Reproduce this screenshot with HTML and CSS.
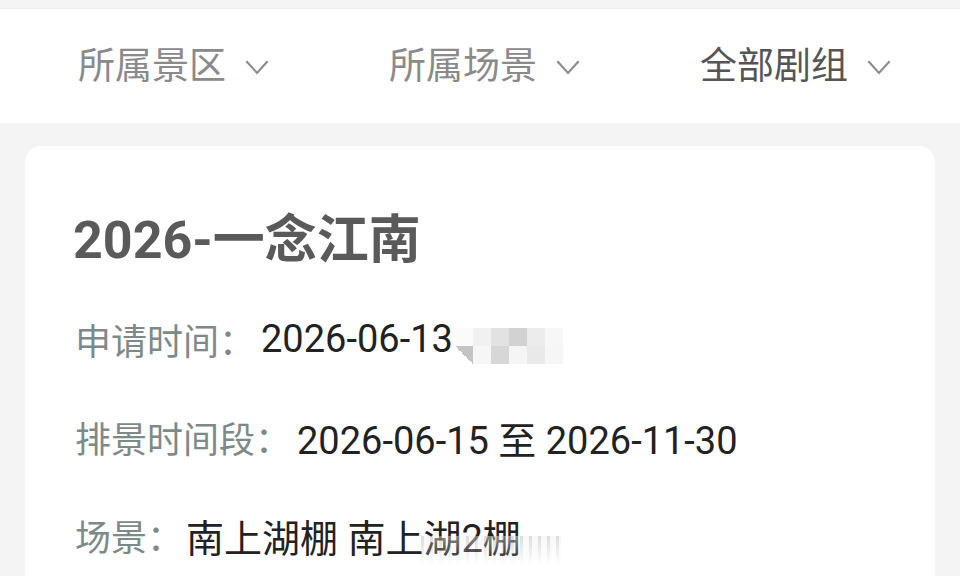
FILE: index.html
```html
<!DOCTYPE html>
<html lang="zh-CN">

<head>
    <meta charset="UTF-8">
    <meta name="viewport" content="width=device-width, initial-scale=1.0">
    <title>排景申请</title>
    <link rel="stylesheet" href="styles.css">
</head>

<body>
    <!-- Filter bar -->
    <div class="filters">
        <div class="filter">所属景区
            <svg class="arrow" viewBox="0 0 24 16"><path d="M2 3 L12 14 L22 3" /></svg>
        </div>
        <div class="filter">所属场景
            <svg class="arrow" viewBox="0 0 24 16"><path d="M2 3 L12 14 L22 3" /></svg>
        </div>
        <div class="filter active">全部剧组
            <svg class="arrow" viewBox="0 0 24 16"><path d="M2 3 L12 14 L22 3" /></svg>
        </div>
    </div>

    <!-- Schedule card -->
    <div class="card">
        <h2 class="title">2026-一念江南</h2>
        <div class="row">
            <span class="label">申请时间：</span>
            <span class="value">2026-06-13</span>
            <span class="mosaic">
                <i class="c1"></i><i class="c2"></i><i class="c3"></i><i class="c4"></i><i class="c5"></i><i class="c6"></i>
                <i class="c7"></i><i class="c8"></i><i class="c9"></i><i class="c10"></i><i class="c11"></i><i class="c12"></i>
            </span>
        </div>
        <div class="row">
            <span class="label">排景时间段：</span>
            <span class="value">2026-06-15 至 2026-11-30</span>
        </div>
        <div class="row">
            <span class="label">场景：</span>
            <span class="value scene">南上湖棚 南上湖2棚</span>
            <span class="blur"></span>
        </div>
    </div>
</body>

</html>
```

FILE: styles.css
```css
/* Page */
body {
    margin: 0;
    background-color: #f4f4f4;
    font-family: "Noto Sans CJK SC", "Noto Sans", sans-serif;
    overflow: hidden;
}

/* Filter bar at the top */
.filters {
    margin-top: 8px;
    height: 114px;
    background-color: #fff;
    display: flex;
    align-items: center;
    justify-content: space-between;
    padding: 0 68px 0 78px;
    border-top: 1px solid #ececec;
}

.filter {
    display: flex;
    align-items: center;
    gap: 18px;
    font-size: 37px;
    color: #8a8a8a;
    margin-top: -6px;
}

.filter.active {
    color: #555;
}

.arrow {
    width: 26px;
    height: 17px;
    margin-top: 6px;
}

.arrow path {
    fill: none;
    stroke: #8c8c8c;
    stroke-width: 2;
}

/* Card */
.card {
    margin: 23px 25px 0;
    background-color: #fff;
    border-radius: 16px;
    padding: 46px 48px 0;
    height: 440px;
}

.title {
    margin: 0;
    font-family: Roboto, "Noto Sans CJK SC", sans-serif;
    font-size: 52px;
    line-height: 98px;
    font-weight: bold;
    color: #5a5a5a;
}

.row {
    display: flex;
    align-items: center;
    height: 98px;
    font-size: 36px;
    position: relative;
}

.label {
    color: #7e8a87;
    margin-left: 2px;
}

.value {
    font-family: Roboto, "Noto Sans CJK SC", sans-serif;
    font-size: 38px;
    color: #222;
    margin-left: 6px;
}

.value.scene {
    margin-left: 3px;
}

/* Pixelated watermark after the date */
.mosaic {
    display: grid;
    grid-template-columns: repeat(6, 18px);
    grid-template-rows: 18px 18px;
    margin-left: 2px;
    margin-top: 14px;
}

.mosaic i {
    display: block;
}

.c1 { background: #fbfbfb; }
.c2 { background: #f1f1f1; }
.c3 { background: #e2e2e2; }
.c4 { background: #d2d2d2; }
.c5 { background: #ececec; }
.c6 { background: #f7f7f7; }
.c7 { background: linear-gradient(45deg, #fff 50%, #c4c4c4 50%); }
.c8 { background: #f6f6f6; }
.c9 { background: #d7d7d7; }
.c10 { background: #f5f5f5; }
.c11 { background: #e9e9e9; }
.c12 { background: #f6f6f6; }

/* Smeared watermark on the last line */
.blur {
    position: absolute;
    left: 348px;
    top: 50px;
    width: 140px;
    height: 28px;
    background: repeating-linear-gradient(to right, rgba(190, 190, 190, 0.55) 0 3px, rgba(240, 240, 240, 0.5) 3px 9px);
    -webkit-mask-image: linear-gradient(to bottom, #000, transparent);
    mask-image: linear-gradient(to bottom, #000, transparent);
}
```
